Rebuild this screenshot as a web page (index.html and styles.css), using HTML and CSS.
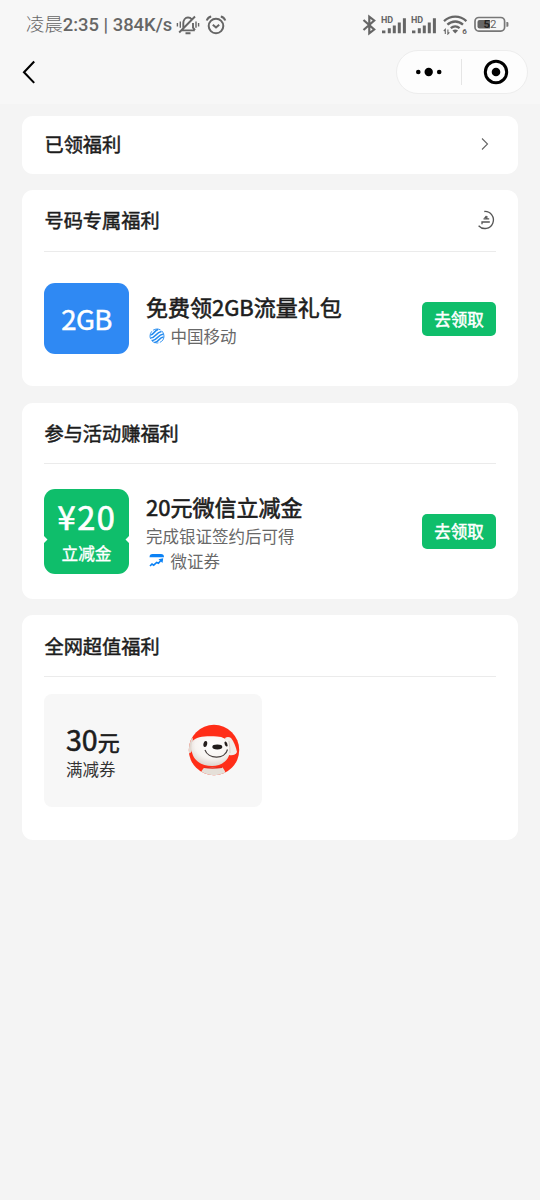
FILE: index.html
```html
<!DOCTYPE html>
<html lang="zh-CN">
<head>
<meta charset="utf-8">
<title>福利</title>
<link rel="stylesheet" href="styles.css">
</head>
<body>
<header class="top">
  <div class="status">
    <div class="status-left">
      <span class="clock"><span class="period">凌晨</span>2:35 | 384K/s</span>
      <svg class="mute" width="24" height="22" viewBox="0 0 24 22" fill="none" stroke="#666" stroke-width="1.9">
        <path d="M5.2 16.400h13.600M7.300 14V9.200c0-3 1.800-5.700 4.700-5.700 1.600 0 2.800.6 3.600 1.700M17 9v4.700l2 2.500M9.500 19.200h5M3.200 18.500 19 2.500"/>
        <path d="M4.300 7.500v6.200M1.400 9v3.500M20 7.500v6.200M22.600 9v3.500" stroke-width="1.400"/>
      </svg>
      <svg class="alarm" width="22" height="22" viewBox="0 0 22 22" fill="none" stroke="#666" stroke-width="2">
        <circle cx="11" cy="12" r="7.300"/><path d="m7.800 10.700 3.200 2.800 3.200-2.800M1.700 6.500C2.500 4.300 4 3 6.200 2.500M20.300 6.500C19.500 4.300 18 3 15.800 2.500"/>
      </svg>
    </div>
    <div class="status-right">
      <svg class="bt" width="14" height="22" viewBox="0 0 14 22" fill="none" stroke="#666" stroke-width="2.200"><path d="m1.500 6 10.700 9.500L7.300 19.300V2.700l4.900 3.800L1.500 16"/></svg>
      <svg class="signal" width="26" height="20" viewBox="0 0 26 20"><text class="hd" x="0" y="8">HD</text><path d="M1 15.500h3.400v2.800H1zM6.800 13.200h3v5.100h-3zM11.800 10.600h3v7.700h-3zM16.800 7.500h3v10.800h-3zM21.900 3.300h3v15h-3z" fill="#666"/></svg>
      <svg class="signal" width="26" height="20" viewBox="0 0 26 20"><text class="hd" x="0" y="8">HD</text><path d="M1 15.500h3.400v2.800H1zM6.800 13.200h3v5.100h-3zM11.800 10.600h3v7.700h-3zM16.800 7.500h3v10.800h-3zM21.900 3.300h3v15h-3z" fill="#666"/></svg>
      <svg class="wifi" width="25" height="20" viewBox="0 0 25 20" fill="none" stroke="#666" stroke-width="2.300"><path d="M1 6.200C7.500.2 17 .2 23.400 6.200M4.400 9.700c4.600-4.300 11-4.300 15.600 0M7.800 13.200c2.600-2.300 6.200-2.300 8.800 0"/><path d="M9.400 15.400q2.900-1.800 5.700 0L12.200 18.500z" fill="#666" stroke="none"/><path d="M2.300 19v-4.600L.8 16M4.900 14.400V19l1.500-1.600" stroke-width="1.100"/><text class="wifi-gen" x="19.200" y="19.200">6</text></svg>
      <svg class="battery" width="36" height="17" viewBox="0 0 36 17"><rect x="1" y="1.500" width="29.600" height="13.600" rx="3.800" fill="none" stroke="#777" stroke-width="1.700"/><path d="M5.500 4.100H16v8.400H5.500q-2 0-2-2V6.100q0-2 2-2z" fill="#666"/><path d="M32.400 5.900h1q1 0 1 1v2.800q0 1-1 1h-1z" fill="#777"/><text class="level" x="9.500" y="12.400"><tspan class="level-on">5</tspan>2</text></svg>
    </div>
  </div>
  <nav class="nav">
    <svg class="back" width="14" height="24" viewBox="0 0 14 24" fill="none" stroke="#000" stroke-width="2.100"><path d="M12.200 1.500 2 12.200l10.200 10.700"/></svg>
    <div class="capsule">
      <svg width="28" height="12" viewBox="0 0 28 12"><circle cx="3.300" cy="6" r="2.300"/><circle cx="13.700" cy="6" r="4.200"/><circle cx="24.200" cy="6" r="2.300"/></svg>
      <i class="split"></i>
      <svg width="26" height="26" viewBox="0 0 26 26"><circle cx="13" cy="13" r="10.700" fill="none" stroke="#000" stroke-width="3"/><circle cx="13" cy="13" r="4.300"/></svg>
    </div>
  </nav>
</header>
<main class="cards">
  <section class="card claimed">
    <h2 class="heading">已领福利</h2>
    <svg class="arrow" width="10" height="14" viewBox="0 0 10 14" fill="none" stroke="#666" stroke-width="1.100"><path d="m2 1.500 5.500 5.500L2 12.500"/></svg>
  </section>

  <section class="card offer">
    <div class="card-head">
      <h2 class="heading">号码专属福利</h2>
      <svg width="18" height="20" viewBox="0 0 18 20" fill="none" stroke="#555" stroke-width="1.300"><path d="M6.300 1.500A8.500 8.500 0 1 1 .6 15.700M11.200 8.900H5.500M8.800 5.900V9M11.800 12H4v2.200"/><path d="M8.200 5.200 5.800 8.200h2.400z" fill="#555" stroke="none"/></svg>
    </div>
    <div class="row">
      <div class="tile data">2GB</div>
      <div class="info">
        <h3 class="title">免费领2GB流量礼包</h3>
        <p class="source">
          <svg width="16" height="16" viewBox="0 0 16 16" fill="none" stroke="#258bef" stroke-width="1.600"><circle cx="8" cy="8" r="7" stroke-width=".9" stroke-dasharray="8 1.500"/><path d="M1.500 7C5 7 5 2.500 9 1.500M1.500 10C7 10 6.500 4.500 12.500 3.500M3 12.800C9 12 8 7 14.500 6M5.500 14.500C10.500 14 9.500 9.500 14.500 9"/></svg>
          中国移动
        </p>
      </div>
      <button class="claim">去领取</button>
    </div>
  </section>

  <section class="card offer">
    <div class="card-head"><h2 class="heading">参与活动赚福利</h2></div>
    <div class="row">
      <div class="tile coupon"><span class="amount">¥20</span><span class="kind">立减金</span></div>
      <div class="info">
        <h3 class="title">20元微信立减金</h3>
        <p class="desc">完成银证签约后可得</p>
        <p class="source">
          <svg width="16" height="16" viewBox="0 0 16 16" fill="none"><path d="M.5 4.200Q.5 1 3.500 1h8.500q3 0 3 3.200z" fill="#0b82f5"/><path d="m1 13 2-2 1.700 1.200 3-2.700 1.700.7 3.300-3.700" stroke="#0b82f5" stroke-width="1.600"/><path d="m9.500 6.300 4.700-1-.7 4.600z" fill="#0b82f5"/></svg>
          微证券
        </p>
      </div>
      <button class="claim">去领取</button>
    </div>
  </section>

  <section class="card network">
    <div class="card-head"><h2 class="heading">全网超值福利</h2></div>
    <div class="voucher">
      <div>
        <p class="value"><span class="number">30</span>元</p>
        <p class="rule">满减券</p>
      </div>
      <svg width="52" height="52" viewBox="0 0 52 52">
        <defs>
          <clipPath id="disc"><circle cx="26" cy="26" r="25.200"/></clipPath>
          <radialGradient id="fur" cx=".55" cy=".3" r=".75"><stop offset="0" stop-color="#fff"/><stop offset=".6" stop-color="#f7f4f1"/><stop offset="1" stop-color="#d9cdc6"/></radialGradient>
        </defs>
        <g clip-path="url(#disc)">
          <path d="M0 0h52v52H0z" fill="#ff2e18"/>
          <path d="M12 52q1-6 5-9h17q4 4 4 9z" fill="#e5dfd8"/>
          <path d="M16 43.200q8 1.500 18 0" stroke="#e52c20" stroke-width="1.600" fill="none"/>
          <path d="M5 14Q-1 16 0 29q3 1 4-3z" fill="#e1d8d0"/>
          <path d="M37 14q3-2 6 0 4 5 6 14-2 4-8 3z" fill="#f0ece8"/>
          <path d="M4 18C8 12 19 12 29 12.500q9 .5 12 6.500c4 13-4 23-17 23C10 42 1 33 4 18z" fill="url(#fur)"/>
          <path d="M41 17q1 7 1 12" stroke="#d7cec8" fill="none"/>
          <ellipse cx="17.300" cy="20" rx="1.900" ry="3" fill="#26201e" transform="rotate(10 17.300 20)"/>
          <ellipse cx="38" cy="20" rx="1.300" ry="2.700" fill="#26201e" transform="rotate(-20 38 20)"/>
          <ellipse cx="29.300" cy="23" rx="5" ry="2.400" fill="#201c1b"/>
          <path d="M17 26c3 9 20 10 22.500-.5" fill="none" stroke="#48413f" stroke-width="1.200"/>
        </g>
      </svg>
    </div>
  </section>
</main>
</body>
</html>
```
FILE: styles.css
```css
* { box-sizing: border-box; }
body {
  margin: 0;
  min-height: 1200px;
  background: #f4f4f4;
  color: #1d1d1d;
  font-family: "Noto Sans CJK SC", sans-serif;
}
h2, h3, p { margin: 0; font-weight: 400; }
svg { display: block; flex: none; }

.top { height: 104px; background: #f7f7f7; }
.status {
  height: 49px;
  padding: 0 30px 0 26px;
  display: flex;
  align-items: center;
  justify-content: space-between;
  color: #666;
}
.status-left, .status-right { display: flex; align-items: center; }
.clock {
  font: 500 18.4px/50px Roboto, "Noto Sans CJK SC", sans-serif;
  white-space: nowrap;
  width: 150px;
  padding-top: 1px;
}
.period { font-weight: 300; }
.alarm { margin-left: 5px; }
.bt { margin-right: 5px; }
.signal { margin-right: 4px; }
.signal + .wifi { margin: 0 6px 0 2px; }
.hd { font: 700 9px Roboto, sans-serif; fill: #666; }
.wifi-gen { font: 700 8px Roboto, sans-serif; fill: #666; stroke: none; }
.level { font: 400 11.500px Roboto, sans-serif; fill: #666; }
.level-on { font-weight: 700; fill: #222; }

.nav {
  height: 46px;
  padding: 0 12px 0 22px;
  display: flex;
  align-items: center;
  justify-content: space-between;
}
.capsule {
  width: 132px;
  height: 44px;
  border: 1px solid #ededed;
  border-radius: 22px;
  background: #fdfdfd;
  display: flex;
  align-items: center;
  padding: 0 18px;
  justify-content: space-between;
}
.split { width: 1px; height: 26px; background: #e5e5e5; margin-right: 3px; }

.cards {
  padding: 11.500px 22px 0;
  display: flex;
  flex-direction: column;
  gap: 16.600px;
}
.card { background: #fff; border-radius: 11px; padding: 0 22px; }
.heading {
  font-size: 19.200px;
  line-height: 28px;
  padding-left: .5px;
  -webkit-text-stroke: .5px #1d1d1d;
}
.claimed {
  height: 58px;
  padding-bottom: 1px;
  display: flex;
  align-items: center;
  justify-content: space-between;
}
.arrow { margin-right: 6px; }
.offer { height: 196px; display: flex; flex-direction: column; }
.card-head {
  flex: none;
  height: 61.500px;
  border-bottom: 1px solid #ebebeb;
  display: flex;
  align-items: center;
  justify-content: space-between;
}
.row { flex: 1; display: flex; align-items: center; }
.tile {
  width: 85px;
  border-radius: 11px;
  color: #fff;
  flex: none;
}
.data {
  height: 71px;
  background: #2f89f3;
  font-size: 27.500px;
  line-height: 70px;
  text-align: center;
  letter-spacing: -.6px;
  -webkit-text-stroke: .5px #fff;
}
.coupon {
  height: 85px;
  clip-path: polygon(0 0, 100% 0, 100% 47px, 81.500px 50.500px, 100% 54px, 100% 100%, 0 100%, 0 54px, 3.500px 50.500px, 0 47px);
  background: #0fbe6b;
  display: flex;
  flex-direction: column;
  align-items: center;
}
.amount {
  font-size: 32.500px;
  line-height: 40px;
  margin-top: 7px;
  padding-left: 1px;
  letter-spacing: 1.700px;
  -webkit-text-stroke: .7px #fff;
}
.kind {
  font-size: 16.700px;
  line-height: 24px;
  margin-top: 5px;
  -webkit-text-stroke: .3px #fff;
}
.info { margin-left: 17px; padding-top: 2px; flex: 1; }
.title {
  font-size: 22px;
  line-height: 31px;
  margin-bottom: 2px;
  white-space: nowrap;
  -webkit-text-stroke: .6px #1d1d1d;
}
.source, .desc { font-size: 16.500px; line-height: 25px; color: #686868; }
.source { display: flex; align-items: center; gap: 5.500px; padding-left: 3px; }
.claim {
  width: 74px;
  height: 34.500px;
  padding: 0;
  border: 0;
  border-radius: 5px;
  background: #0fbe6b;
  color: #fff;
  font: 400 16.500px/34px "Noto Sans CJK SC", sans-serif;
  -webkit-text-stroke: .5px #fff;
}
.network { height: 225px; }
.voucher {
  width: 217.500px;
  height: 113px;
  margin-top: 17px;
  padding: 0 22px;
  border-radius: 8px;
  background: #f7f7f7;
  display: flex;
  align-items: center;
  justify-content: space-between;
}
.value { font-size: 22px; line-height: 32px; padding-top: 3px; -webkit-text-stroke: .6px #1d1d1d; }
.number { font-size: 28.500px; }
.rule { font-size: 16.500px; line-height: 24px; color: #333; }
```
